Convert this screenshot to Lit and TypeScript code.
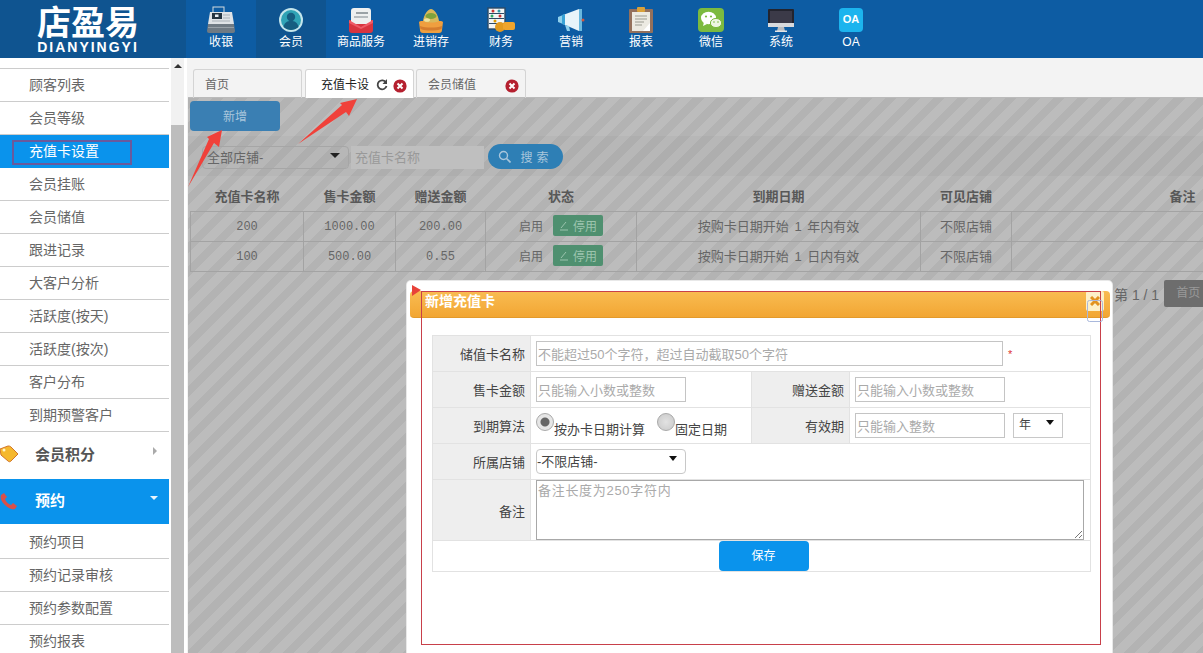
import { LitElement, html, css, svg } from 'lit';
import { customElement } from 'lit/decorators.js';

const navIcons: Record<string, unknown> = {
  register: svg`<rect x="5" y="-1" width="11" height="6" fill="none" stroke="#d4dade" stroke-width="1"/><path d="M2 4h22l2 12H0z" fill="#dfe3e6"/><rect x="4" y="5" width="10" height="6" fill="#24333f"/><rect x="7" y="6.5" width="3.5" height="2.5" fill="#e8eef2"/><path d="M15 7h7M15 10h7M4 13h18" stroke="#aab2b8" stroke-width="1.2"/><path d="M0 16h26l1 7a2 2 0 0 1-2 2H1a2 2 0 0 1-2-2z" fill="#6f7a83"/><rect x="0" y="19" width="26" height="1" fill="#97a0a7"/>`,
  member: svg`<circle cx="13" cy="12" r="12" fill="#c4e6ec"/><circle cx="13" cy="12" r="10" fill="#2fa3b5"/><circle cx="13" cy="9" r="4.2" fill="#155e80"/><path d="M5.5 19c1-5 4-6 7.500-6s6.500 1 7.500 6c-2 2-5 3-7.500 3s-5.500-1-7.500-3z" fill="#155e80"/>`,
  goods: svg`<path d="M1 12h24v10a3 3 0 0 1-3 3H4a3 3 0 0 1-3-3z" fill="#d8343f"/><rect x="3" y="0" width="20" height="16" rx="3" fill="#eef0f0"/><rect x="8" y="4" width="12" height="2" fill="#9aa2a6"/><rect x="6" y="8" width="14" height="2" fill="#b6bcbf"/><path d="M1 12l12 7 12-7v3l-12 6-12-6z" fill="#ee5a66"/>`,
  stock: svg`<path d="M1 14c0-2 24-2 24 0l-1 8a3 3 0 0 1-3 3H5a3 3 0 0 1-3-3z" fill="#ef9f3f"/><path d="M2 18c6 2 16 2 22 0l-.5 3c-6 2-15 2-21 0z" fill="#d57d2e"/><path d="M5 13C6 6 10 1 13 1s7 5 8 12c-4 2-12 2-16 0z" fill="#d9b85a"/><ellipse cx="13" cy="8" rx="5.500" ry="3" fill="#7fa23c"/><ellipse cx="9" cy="12" rx="3" ry="1.800" fill="#f0e3a0"/>`,
  finance: svg`<rect x="0" y="0" width="17" height="21" fill="#f4f6f6" stroke="#2d4a66" stroke-width="1.400"/><path d="M1 5.500h15M1 10.500h15M1 15.500h15" stroke="#2d4a66"/><circle cx="5" cy="3" r="1.500" fill="#c33"/><circle cx="11" cy="3" r="1.500" fill="#39a"/><circle cx="4" cy="8" r="1.500" fill="#3a6"/><circle cx="12" cy="8" r="1.500" fill="#c33"/><circle cx="7" cy="13" r="1.500" fill="#d90"/><ellipse cx="12" cy="19" rx="5" ry="5" fill="#e39a1f"/><rect x="15" y="14" width="12" height="8" rx="2" fill="#efa52c"/>`,
  market: svg`<path d="M0 9l5-2v9l-5-2z" fill="#8fd0ec"/><path d="M5 7l16-6v22L5 16z" fill="#e8f4fa"/><path d="M21 1h3v22h-3z" fill="#6ab8de"/><path d="M4 7l3-1v11l-3-1z" fill="#39a3d6"/><path d="M7 17l4 1 1 5H9z" fill="#8fd0ec"/><circle cx="25" cy="12" r="1.500" fill="#d2553f"/>`,
  report: svg`<rect x="1" y="1" width="24" height="24" rx="1" fill="#94705c"/><rect x="4" y="4" width="18" height="19" fill="#eceae2"/><rect x="9" y="-1" width="8" height="5" rx="1" fill="#d9a13a"/><path d="M7 8h12M7 11h12M7 14h9M7 17h7" stroke="#9a9a90" stroke-width="1.200"/><path d="M22 15v8h-7z" fill="#fff"/>`,
  wechat: svg`<rect x="0" y="0" width="26" height="24" rx="4" fill="#7cba3f"/><ellipse cx="10.500" cy="10" rx="7.500" ry="6.200" fill="#fff"/><path d="M6 14l-1 4 4-2z" fill="#fff"/><ellipse cx="18" cy="15" rx="5.600" ry="4.600" fill="#eef6e4" stroke="#7cba3f"/><circle cx="8" cy="8.500" r="1.100" fill="#7cba3f"/><circle cx="13" cy="8.500" r="1.100" fill="#7cba3f"/><circle cx="16" cy="14" r=".8" fill="#7cba3f"/><circle cx="20" cy="14" r=".8" fill="#7cba3f"/>`,
  system: svg`<rect x="0" y="1" width="26" height="16" rx="1" fill="#23242e"/><rect x="2" y="3" width="22" height="12" fill="#3b3a48"/><rect x="0" y="15" width="26" height="4" fill="#d8dadd"/><path d="M10 19h6l1 4H9z" fill="#b9bcc0"/><rect x="7" y="22.500" width="12" height="1.500" fill="#e2e4e6"/>`,
};

const navItems = [
  { label: '收银', icon: 'register' },
  { label: '会员', icon: 'member', active: true },
  { label: '商品服务', icon: 'goods' },
  { label: '进销存', icon: 'stock' },
  { label: '财务', icon: 'finance' },
  { label: '营销', icon: 'market' },
  { label: '报表', icon: 'report' },
  { label: '微信', icon: 'wechat' },
  { label: '系统', icon: 'system' },
  { label: 'OA', icon: 'oa' },
];

const memberLinks = ['顾客列表', '会员等级', '充值卡设置', '会员挂账', '会员储值', '跟进记录', '大客户分析', '活跃度(按天)', '活跃度(按次)', '客户分布', '到期预警客户'];
const bookingLinks = ['预约项目', '预约记录审核', '预约参数配置', '预约报表'];

const cards = [
  { name: '200', price: '1000.00', gift: '200.00', expire: '按购卡日期开始 1 年内有效' },
  { name: '100', price: '500.00', gift: '0.55', expire: '按购卡日期开始 1 日内有效' },
];

@customElement('app-root')
export class AppRoot extends LitElement {
  static styles = css`
    :host {
      display: block;
      position: relative;
      width: 1203px;
      height: 653px;
      overflow: hidden;
      background: #fff;
      font-family: 'Liberation Sans', 'Noto Sans CJK SC', sans-serif;
      font-size: 13px;
      color: #555;
    }

    /* top bar */
    .top { display: flex; height: 58px; background: #0d5ca3; }
    .logo {
      width: 186px;
      background: #0f5490;
      color: #fff;
      text-align: center;
      box-sizing: border-box;
      padding: 5px 10px 0 0;
      font-weight: 700;
    }
    .logo-cn { font-size: 34px; line-height: 36px; }
    .logo-en { font-size: 14px; line-height: 12px; letter-spacing: 2px; }
    .nav { display: flex; }
    .nav-item {
      width: 70px;
      display: flex;
      flex-direction: column;
      align-items: center;
      padding-top: 8px;
      box-sizing: border-box;
      color: #fff;
      font-size: 12px;
    }
    .nav-item.active { background: #0f5490; }
    .nav-item svg { width: 26px; height: 25px; display: block; overflow: visible; }
    .nav-item span { margin-top: 1px; line-height: 17px; }
    .oa-icon {
      width: 24px;
      height: 24px;
      border-radius: 4px;
      background: #1cb4ee;
      font-size: 11px;
      font-weight: 700;
      line-height: 23px;
      text-align: center;
      margin-bottom: 1px;
    }

    .body { display: flex; height: 595px; }

    /* left menu */
    .side { width: 169px; padding-top: 10px; box-sizing: border-box; flex: none; }
    .side-list { border-top: 1px solid #ccc; }
    .link {
      position: relative;
      height: 33px;
      box-sizing: border-box;
      padding-left: 29px;
      border-bottom: 1px solid #ccc;
      font-size: 14px;
      line-height: 32px;
      color: #666;
    }
    .link.active { background: #0a93ec; color: #fff; border-bottom-color: #0a93ec; }
    .link.active::after {
      content: '';
      position: absolute;
      left: 12px;
      top: 5px;
      width: 116px;
      height: 21px;
      border: 2px solid #6a5a9c;
    }
    .group {
      position: relative;
      height: 46px;
      display: flex;
      align-items: center;
      padding: 0 0 4px 35px;
      font-size: 15px;
      font-weight: 700;
      color: #555;
      box-sizing: border-box;
    }
    .group.open { height: 45px; background: #0a93ec; color: #fff; margin: 1px 0 2px; }
    .group svg { position: absolute; left: 0; top: 13px; width: 19px; height: 19px; }
    .caret-right {
      position: absolute;
      left: 153px;
      top: 15px;
      border-left: 4px solid #aaa;
      border-top: 4px solid transparent;
      border-bottom: 4px solid transparent;
    }
    .caret-down {
      position: absolute;
      left: 150px;
      top: 17px;
      border-top: 4px solid #e8f4fc;
      border-left: 4px solid transparent;
      border-right: 4px solid transparent;
    }

    .scroll { width: 18px; flex: none; padding-left: 2px; box-sizing: border-box; }
    .scroll-track { width: 13px; height: 100%; background: #f1f1f1; position: relative; }
    .scroll-up {
      position: absolute;
      left: 3px;
      top: 6px;
      border-bottom: 4px solid #333;
      border-left: 4px solid transparent;
      border-right: 4px solid transparent;
    }
    .scroll-thumb { position: absolute; left: 0; right: 0; top: 67px; bottom: 0; background: #bdbdbd; }

    /* main */
    .main { flex: 1; min-width: 0; background: #f3f3f3; overflow: hidden; padding-left: 1px; }
    .tabs { display: flex; height: 40px; padding: 11px 0 0 5px; box-sizing: border-box; border-bottom: 1px solid #bbb; }
    .tab {
      display: flex;
      align-items: center;
      box-sizing: border-box;
      width: 110px;
      height: 29px;
      margin-right: 3px;
      padding: 0 6px 2px 11px;
      border: 1px solid #d4d4d4;
      border-bottom: 0;
      border-radius: 3px 3px 0 0;
      font-size: 12px;
      color: #666;
    }
    .tab:first-child { width: 109px; }
    .tab.active { width: 109px; background: #fff; color: #222; padding-left: 15px; margin-right: 2px; }
    .tab .fill { flex: 1; }
    .tab svg { display: block; flex: none; margin-top: 5px; }
    .tab .reload { margin: 3px 5px 0 0; }

    .page {
      height: 555px;
      padding-top: 3px;
      box-sizing: border-box;
      overflow: hidden;
      background: repeating-linear-gradient(135deg, #b3b3b3 0 8px, #bcbcbc 8px 17px);
    }
    .add {
      width: 90px;
      height: 30px;
      margin-left: 2px;
      border-radius: 4px;
      background: #3a7fb3;
      color: #a9c6dc;
      text-align: center;
      line-height: 32px;
      font-size: 12px;
    }
    .band { height: 40px; margin-top: 5px; padding: 8px 0 0 14px; box-sizing: border-box; background: rgba(0, 0, 0, 0.025); }
    .filters { display: flex; align-items: flex-start; height: 25px; }
    .filter-select {
      position: relative;
      width: 147px;
      height: 23px;
      margin-top: 2px;
      box-sizing: border-box;
      border: 1px solid #a6a6a6;
      border-radius: 4px;
      padding-left: 4px;
      line-height: 21px;
      color: #666;
    }
    .filter-select::after {
      content: '';
      position: absolute;
      right: 8px;
      top: 6px;
      border-top: 5px solid #222;
      border-left: 5px solid transparent;
      border-right: 5px solid transparent;
    }
    .filter-input {
      width: 133px;
      height: 23px;
      margin: 2px 0 0 2px;
      padding-left: 4px;
      box-sizing: border-box;
      background: #bfbfbf;
      color: #999;
      line-height: 23px;
      font-size: 13px;
    }
    .search {
      display: flex;
      align-items: center;
      justify-content: center;
      gap: 9px;
      width: 75px;
      height: 25px;
      margin-left: 4px;
      border-radius: 13px;
      background: #2e7fb5;
      color: #a9c6dc;
      font-size: 12px;
      letter-spacing: 4px;
    }

    .grid {
      width: 1163px;
      margin: 2px 0 0 2px;
      table-layout: fixed;
      border-collapse: collapse;
      text-align: center;
    }
    .grid th { height: 31px; padding: 2px 0 0; font-size: 13px; color: #585858; }
    .grid td {
      height: 27px;
      padding: 0 0 2px;
      border: 1px solid #a3a3a3;
      color: #666;
      font-size: 13px;
    }
    .grid td.num { height: 29px; padding: 0; font-family: 'Liberation Mono', monospace; font-size: 12px; }
    .grid td.expire { word-spacing: 2px; }
    .state { display: flex; align-items: center; justify-content: flex-end; gap: 10px; padding-right: 33px; font-size: 12px; }
    .stop {
      display: flex;
      align-items: center;
      justify-content: center;
      gap: 4px;
      width: 50px;
      height: 21px;
      border-radius: 2px;
      background: #4f9070;
      color: #9cc4ae;
    }

    .pager { display: flex; align-items: center; margin: 8px 0 0 926px; width: 200px; height: 27px; color: #666; font-size: 14px; }
    .pager b {
      font-weight: 400;
      width: 50px;
      height: 27px;
      margin-left: 5px;
      padding-left: 12px;
      box-sizing: border-box;
      border-radius: 2px;
      background: #6d6d6d;
      color: #999;
      font-size: 12px;
      line-height: 27px;
    }

    /* dialog */
    .dialog {
      position: absolute;
      left: 407px;
      top: 281px;
      width: 705px;
      height: 380px;
      box-sizing: border-box;
      padding: 10px 0 0 3px;
      background: #fff;
      border-radius: 4px;
      box-shadow: 0 0 0 1px #e8e8e8;
    }
    .dialog-head {
      height: 27px;
      width: 700px;
      box-sizing: border-box;
      padding-left: 15px;
      border-radius: 4px;
      border-bottom: 1px solid #e39a2b;
      background: linear-gradient(#f9bc52, #f2a633);
      color: #fff;
      font-size: 14px;
      font-weight: 700;
      line-height: 21px;
    }
    .form {
      width: 658px;
      margin: 17px 0 0 22px;
      table-layout: fixed;
      border-collapse: collapse;
    }
    .form td { padding: 0 0 0 5px; border: 1px solid #e2e2e2; font-size: 13px; color: #444; box-sizing: border-box; }
    .form td.label { padding: 0 5px 0 0; background: #eee; text-align: right; color: #444; }
    .field {
      display: inline-block;
      box-sizing: border-box;
      height: 25px;
      padding-left: 1px;
      border: 1px solid #c4c4c4;
      color: #aaa;
      font-size: 13px;
      line-height: 25px;
      vertical-align: middle;
    }
    .w150 { width: 150px; }
    .w467 { width: 467px; }
    .star { color: #d33; margin-left: 5px; font-size: 11px; vertical-align: middle; }
    .pick {
      display: inline-block;
      position: relative;
      box-sizing: border-box;
      height: 25px;
      width: 150px;
      border: 1px solid #c8c8c8;
      border-radius: 4px;
      line-height: 23px;
      color: #444;
      vertical-align: middle;
    }
    .pick::after {
      content: '';
      position: absolute;
      right: 8px;
      top: 6px;
      border-top: 5px solid #111;
      border-left: 4px solid transparent;
      border-right: 4px solid transparent;
    }
    .pick.unit { width: 50px; margin-left: 8px; padding-left: 5px; border-radius: 0; font-size: 12px; }
    .radio {
      display: inline-block;
      box-sizing: border-box;
      width: 18px;
      height: 18px;
      border-radius: 50%;
      border: 1px solid #aaa;
      background: radial-gradient(circle, #e2e2e2, #c8c8c8);
      vertical-align: 3px;
    }
    .radio.on { background: radial-gradient(circle, #666 0 4px, #e6e6e6 5px); }
    .radio-text { margin-right: 12px; font-size: 13px; }
    .memo {
      position: relative;
      box-sizing: border-box;
      height: 60px;
      width: 548px;
      padding: 2px 0 0 1px;
      border: 1px solid #a8a8a8;
      color: #aaa;
      font-size: 13px;
      letter-spacing: 0.7px;
      line-height: 16px;
    }
    .memo svg { position: absolute; right: 1px; bottom: 1px; }
    .save {
      display: block;
      position: relative;
      left: 2px;
      width: 90px;
      height: 30px;
      margin: 0 auto;
      border-radius: 4px;
      background: #0a93ec;
      color: #fff;
      text-align: center;
      font-size: 12px;
      line-height: 30px;
    }

    /* things drawn on top of the screenshot */
    .ink { position: absolute; left: 0; top: 0; width: 1203px; height: 653px; pointer-events: none; }
    .close {
      position: absolute;
      left: 1086px;
      top: 291px;
      width: 18px;
      height: 20px;
      background: #fdf0c8;
      border-radius: 2px;
    }
    .close svg { display: block; margin: 5px 0 0 4px; }
  `;

  private closeIcon() {
    return html`<svg width="14" height="14" viewBox="0 0 14 14">
      <circle cx="7" cy="7" r="6.6" fill="#b5202f" />
      <path d="M4.5 4.5l5 5M9.5 4.5l-5 5" stroke="#fff" stroke-width="2" />
    </svg>`;
  }

  private renderTop() {
    return html`<div class="top">
      <div class="logo">
        <div class="logo-cn">店盈易</div>
        <div class="logo-en">DIANYINGYI</div>
      </div>
      <div class="nav">
        ${navItems.map(item => html`
          <div class="nav-item ${item.active ? 'active' : ''}">
            ${item.icon === 'oa'
              ? html`<div class="oa-icon">OA</div>`
              : html`<svg viewBox="0 0 26 25">${navIcons[item.icon]}</svg>`}
            <span>${item.label}</span>
          </div>
        `)}
      </div>
    </div>`;
  }

  private renderSide() {
    return html`<div class="side">
      <div class="side-list">
        ${memberLinks.map(name => html`<div class="link ${name === '充值卡设置' ? 'active' : ''}">${name}</div>`)}
      </div>
      <div class="group">
        <svg viewBox="0 0 19 19"><path d="M0 4l8-3c1 0 2 0 3 1l7 7-7 7c-1 1-2 1-3 0L1 10z" fill="#f5b82e" stroke="#d2752a" /><circle cx="4" cy="5" r="1.500" fill="#fff3c8" /></svg>
        会员积分<i class="caret-right"></i>
      </div>
      <div class="group open">
        <svg viewBox="0 0 19 19"><path d="M1 3l3-2 3 4-2 2c1 3 3 5 6 6l2-2 4 3-2 3c-2 1-6 0-10-4S0 6 1 3z" fill="#d8504a" /></svg>
        预约<i class="caret-down"></i>
      </div>
      ${bookingLinks.map(name => html`<div class="link">${name}</div>`)}
    </div>
    <div class="scroll"><div class="scroll-track"><i class="scroll-up"></i><div class="scroll-thumb"></div></div></div>`;
  }

  private renderMain() {
    return html`<div class="main">
      <div class="tabs">
        <div class="tab">首页</div>
        <div class="tab active">
          充值卡设<span class="fill"></span>
          <svg class="reload" width="12" height="12" viewBox="0 0 12 12"><path d="M10 3.5A4.5 4.5 0 1 0 10.5 7" fill="none" stroke="#444" stroke-width="1.8" /><path d="M11 0v5H6.5z" fill="#444" /></svg>
          ${this.closeIcon()}
        </div>
        <div class="tab">会员储值<span class="fill"></span>${this.closeIcon()}</div>
      </div>
      <div class="page">
        <div class="add">新增</div>
        <div class="band">
          <div class="filters">
            <div class="filter-select">全部店铺-</div>
            <div class="filter-input">充值卡名称</div>
            <div class="search">
              <svg width="13" height="13" viewBox="0 0 13 13"><circle cx="5.5" cy="5.5" r="4" fill="none" stroke="#a9c6dc" stroke-width="1.4" /><path d="M8.5 8.5l4 4" stroke="#a9c6dc" stroke-width="1.6" /></svg>
              <span>搜索</span>
            </div>
          </div>
        </div>
        <table class="grid">
          <colgroup><col style="width:113px" /><col style="width:92px" /><col style="width:90px" /><col style="width:151px" /><col style="width:284px" /><col style="width:91px" /><col style="width:342px" /></colgroup>
          <tr><th>充值卡名称</th><th>售卡金额</th><th>赠送金额</th><th>状态</th><th>到期日期</th><th>可见店铺</th><th>备注</th></tr>
          ${cards.map(card => html`<tr>
            <td class="num">${card.name}</td>
            <td class="num">${card.price}</td>
            <td class="num">${card.gift}</td>
            <td><div class="state">启用<span class="stop"><svg width="10" height="10" viewBox="0 0 10 10"><path d="M1 9h8M2 7l5-6" stroke="#9cc4ae" /></svg>停用</span></div></td>
            <td class="expire">${card.expire}</td>
            <td>不限店铺</td>
            <td></td>
          </tr>`)}
        </table>
        <div class="pager">第 1 / 1<b>首页</b></div>
      </div>
    </div>`;
  }

  private renderDialog() {
    return html`<div class="dialog">
      <div class="dialog-head">新增充值卡</div>
      <table class="form">
        <colgroup><col style="width:98px" /><col style="width:221px" /><col style="width:98px" /><col style="width:241px" /></colgroup>
        <tr style="height:36px">
          <td class="label">储值卡名称</td>
          <td colspan="3"><span class="field w467">不能超过50个字符，超过自动截取50个字符</span><span class="star">*</span></td>
        </tr>
        <tr style="height:36px">
          <td class="label">售卡金额</td>
          <td><span class="field w150">只能输入小数或整数</span></td>
          <td class="label">赠送金额</td>
          <td><span class="field w150">只能输入小数或整数</span></td>
        </tr>
        <tr style="height:36px">
          <td class="label">到期算法</td>
          <td><span class="radio on"></span><span class="radio-text">按办卡日期计算</span><span class="radio"></span><span class="radio-text">固定日期</span></td>
          <td class="label">有效期</td>
          <td><span class="field w150">只能输入整数</span><span class="pick unit">年</span></td>
        </tr>
        <tr style="height:36px">
          <td class="label">所属店铺</td>
          <td colspan="3"><span class="pick">-不限店铺-</span></td>
        </tr>
        <tr style="height:61px">
          <td class="label">备注</td>
          <td colspan="3" style="vertical-align:top">
            <div class="memo">备注长度为250字符内
              <svg width="8" height="8" viewBox="0 0 8 8"><path d="M8 1L1 8M8 5L5 8" stroke="#777" /></svg>
            </div>
          </td>
        </tr>
        <tr style="height:31px"><td colspan="4" style="padding:0"><span class="save">保存</span></td></tr>
      </table>
    </div>`;
  }

  render() {
    return html`
      ${this.renderTop()}
      <div class="body">${this.renderSide()}${this.renderMain()}</div>
      ${this.renderDialog()}
      <div class="close"><svg width="10" height="10" viewBox="0 0 10 10"><path d="M1 1l8 8M9 1l-8 8" stroke="#e2921f" stroke-width="3" /></svg></div>
      <svg class="ink" viewBox="0 0 1203 653">
        <polygon points="188,187 209,139 207,137 222,130 219,147 214,143" fill="#f0413a" />
        <polygon points="298,144 342,105 340,103 357,99 349,116 346,112" fill="#f0413a" />
        <polygon points="412,285 421,290 412,296" fill="#e8423a" />
        <rect x="421.5" y="291.5" width="679" height="353" fill="none" stroke="#c8404a" />
        <rect x="1087.5" y="300.5" width="15" height="21" rx="2" fill="none" stroke="#a9b8dc" />
      </svg>
    `;
  }
}
